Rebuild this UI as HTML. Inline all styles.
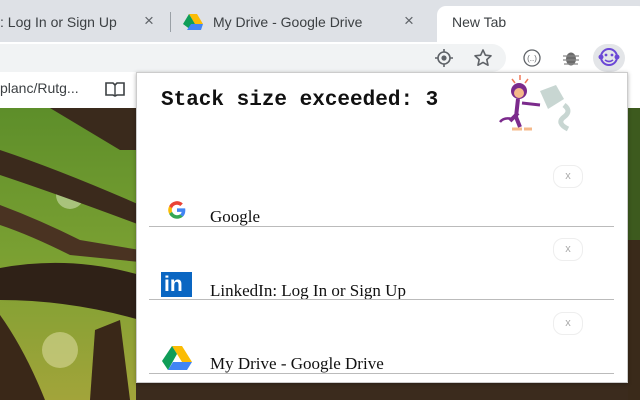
<!DOCTYPE html>
<html><head><meta charset="utf-8"><style>
*{margin:0;padding:0;box-sizing:border-box}
body{width:640px;height:400px;overflow:hidden;position:relative;font-family:"Liberation Sans",sans-serif;background:#fff}
.abs{position:absolute}
</style></head><body>
<svg class="abs" style="left:0;top:108px" width="640" height="292" viewBox="0 108 640 292">
<defs><linearGradient id="g" x1="0" y1="0" x2="0" y2="1"><stop offset="0" stop-color="#5d8e2a"/><stop offset=".5" stop-color="#7aa032"/><stop offset="1" stop-color="#a2a43a"/></linearGradient></defs>
<rect x="0" y="108" width="640" height="292" fill="url(#g)"/>
<circle cx="70" cy="195" r="14" fill="#cfe0b0" opacity=".6"/>
<circle cx="60" cy="350" r="18" fill="#d8d89a" opacity=".6"/>
<path d="M50 108 L140 108 L140 150 L120 150 Z" fill="#3a2a1c"/>
<path d="M0 150 Q60 170 140 205 L140 225 Q60 195 0 175 Z" fill="#3b2a1c"/>
<path d="M0 205 Q40 220 80 240 L140 250 L140 262 L70 255 Q30 235 0 225 Z" fill="#4a3322"/>
<path d="M0 268 Q70 255 140 275 L140 320 Q70 300 0 300 Z" fill="#2f2117"/>
<path d="M0 315 Q25 350 45 400 L0 400 Z" fill="#3a2818"/>
<path d="M95 330 L120 320 L130 400 L90 400 Z" fill="#3a2818"/>
<rect x="136" y="380" width="504" height="20" fill="#3b2b1d"/>
<path d="M628 108 L640 108 L640 240 L628 240 Z" fill="#3d5a1e"/>
<path d="M628 240 L640 240 L640 400 L628 400 Z" fill="#3a2a1a"/>
</svg>
<!-- tab strip -->
<div class="abs" style="left:0;top:0;width:640px;height:42px;background:#dee1e6"></div>
<div class="abs" style="left:0;top:14px;font-size:14px;color:#3c4043">: Log In or Sign Up</div>
<div class="abs" style="left:144px;top:11px;font-size:17px;color:#5f6368">×</div>
<div class="abs" style="left:170px;top:12px;width:1px;height:20px;background:#9aa0a6"></div>
<svg class="abs" style="left:183px;top:14px" width="20" height="16" viewBox="0 0 20 16"><path d="M6 0h8l6 10h-8z" fill="#fbbc04"/><path d="M6 0l6 10-4 6L0 10z" fill="#0f9d58"/><path d="M4 16h14l2-6H8z" fill="#4285f4"/></svg>
<div class="abs" style="left:213px;top:14px;font-size:14px;color:#3c4043">My Drive - Google Drive</div>
<div class="abs" style="left:404px;top:11px;font-size:17px;color:#5f6368">×</div>
<div class="abs" style="left:437px;top:6px;width:210px;height:38px;background:#fff;border-radius:9px 9px 0 0"></div>
<div class="abs" style="left:452px;top:14px;font-size:14px;color:#3c4043">New Tab</div>
<!-- toolbar -->
<div class="abs" style="left:0;top:42px;width:640px;height:66px;background:#fff"></div>
<div class="abs" style="left:-20px;top:44px;width:526px;height:28px;background:#f1f3f4;border-radius:14px"></div>
<svg class="abs" style="left:434px;top:48px" width="20" height="20" viewBox="0 0 20 20"><circle cx="10" cy="10" r="6" fill="none" stroke="#5f6368" stroke-width="1.6"/><circle cx="10" cy="10" r="2.6" fill="#5f6368"/><path d="M10 1v3M10 16v3M1 10h3M16 10h3" stroke="#5f6368" stroke-width="1.6"/></svg>
<svg class="abs" style="left:473px;top:48px" width="20" height="20" viewBox="0 0 20 20"><path d="M10 2l2.4 5.2 5.6.6-4.2 3.8 1.2 5.6L10 14.4 5 17.2l1.2-5.6L2 7.8l5.6-.6z" fill="none" stroke="#5f6368" stroke-width="1.6" stroke-linejoin="round"/></svg>
<svg class="abs" style="left:522px;top:48px" width="20" height="20" viewBox="0 0 20 20"><circle cx="10" cy="10" r="8" fill="none" stroke="#5f6368" stroke-width="1.3"/><text x="10" y="13" font-size="8" text-anchor="middle" fill="#5f6368" font-family="Liberation Sans">(..)</text></svg>
<svg class="abs" style="left:562px;top:48px" width="18" height="20" viewBox="0 0 18 20"><ellipse cx="9" cy="11" rx="5" ry="6.5" fill="#6b6b6b"/><path d="M1 8h16M1 12h16M2 16h14" stroke="#888" stroke-width="1.2"/></svg>
<div class="abs" style="left:593px;top:44px;width:32px;height:28px;background:#e3e5e8;border-radius:14px"></div>
<svg class="abs" style="left:598px;top:46px" width="22" height="22" viewBox="0 0 22 22"><circle cx="11" cy="11" r="8" fill="none" stroke="#6b47d6" stroke-width="2"/><circle cx="3" cy="11" r="2.5" fill="#6b47d6"/><circle cx="19" cy="11" r="2.5" fill="#6b47d6"/><circle cx="8" cy="9" r="1.4" fill="#6b47d6"/><circle cx="14" cy="9" r="1.4" fill="#6b47d6"/><path d="M7 14q4 3 8 0" fill="none" stroke="#6b47d6" stroke-width="1.6"/></svg>
<div class="abs" style="left:0;top:80px;font-size:14px;color:#3c4043">planc/Rutg...</div>
<svg class="abs" style="left:105px;top:81px" width="20" height="16" viewBox="0 0 20 16"><path d="M1 2h7l2 2 2-2h7v12h-7l-2 1-2-1H1z" fill="none" stroke="#3c4043" stroke-width="1.6"/><path d="M10 4v11" stroke="#3c4043" stroke-width="1.4"/></svg>
<!-- popup -->
<div class="abs" style="left:136px;top:72px;width:492px;height:311px;background:#fff;border:1px solid #ccc;box-shadow:0 1px 4px rgba(0,0,0,.3)"></div>
<div class="abs" style="left:161px;top:89px;font-family:'Liberation Mono',monospace;font-size:21px;font-weight:bold;color:#111;letter-spacing:0px">Stack size exceeded: 3</div>
<svg class="abs" style="left:498px;top:73px" width="90" height="60" viewBox="0 0 90 60"><path d="M14 46q-8-2-12 3" stroke="#7b2a8c" stroke-width="2.5" fill="none"/><ellipse cx="21" cy="18" rx="8" ry="8" fill="#7b2a8c"/><ellipse cx="21" cy="20" rx="5" ry="5" fill="#f5b98a"/><path d="M20 26l-2 18 4 10M20 40l-8 8" stroke="#7b2a8c" stroke-width="4" fill="none"/><path d="M24 30l18 2" stroke="#7b2a8c" stroke-width="3"/><path d="M42 18l16-6 8 14-16 10z" fill="#c8d6d2"/><path d="M66 32q8 6 0 12t4 12" stroke="#c8d6d2" stroke-width="5" fill="none"/><path d="M14 6l3 4M22 2v5M30 6l-3 4" stroke="#f07a5a" stroke-width="1.5"/><path d="M14 56h10M26 56h8" stroke="#f5b98a" stroke-width="3"/></svg>
<!-- rows -->
<div class="abs" style="left:553px;top:165px;width:30px;height:23px;border:1px solid #eee;border-radius:10px;font-size:11px;color:#aaa;text-align:center;line-height:21px">x</div>
<svg class="abs" style="left:165px;top:200px" width="24" height="20" viewBox="0 0 48 48"><path d="M44 24.5c0-1.5-.1-3-.4-4.5H24v8.5h11.3a9.7 9.7 0 0 1-4.2 6.3l6.8 5.3c4-3.7 6.1-9.1 6.1-15.6z" fill="#4285f4"/><path d="M24 45c5.7 0 10.4-1.9 13.9-5.1l-6.8-5.3c-1.9 1.3-4.3 2-7.1 2-5.5 0-10.1-3.7-11.8-8.6l-7 5.4C8.7 40.4 15.8 45 24 45z" fill="#34a853"/><path d="M12.2 28c-.9-2.6-.9-5.4 0-8l-7-5.4a21 21 0 0 0 0 18.8z" fill="#fbbc04"/><path d="M24 11.4c3.1 0 5.8 1.1 8 3.1l6-6A20.6 20.6 0 0 0 5.2 14.6l7 5.4c1.7-5 6.3-8.6 11.8-8.6z" fill="#ea4335"/></svg>
<div class="abs" style="left:210px;top:207px;font-family:'Liberation Serif',serif;font-size:17px;color:#111">Google</div>
<div class="abs" style="left:149px;top:226px;width:465px;height:1px;background:#bbb"></div>

<div class="abs" style="left:553px;top:238px;width:30px;height:23px;border:1px solid #eee;border-radius:10px;font-size:11px;color:#aaa;text-align:center;line-height:21px">x</div>
<div class="abs" style="left:161px;top:272px;width:31px;height:25px;background:#0a66c2;color:#fff;font-weight:bold;font-size:21px;line-height:25px;padding-left:3px">in</div>
<div class="abs" style="left:210px;top:281px;font-family:'Liberation Serif',serif;font-size:17px;color:#111">LinkedIn: Log In or Sign Up</div>
<div class="abs" style="left:149px;top:299px;width:465px;height:1px;background:#bbb"></div>

<div class="abs" style="left:553px;top:312px;width:30px;height:23px;border:1px solid #eee;border-radius:10px;font-size:11px;color:#aaa;text-align:center;line-height:21px">x</div>
<svg class="abs" style="left:162px;top:346px" width="30" height="24" viewBox="0 0 30 24"><path d="M10 0h10l10 16H20z" fill="#fbbc04"/><path d="M10 0l5 8-9 16L0 15z" fill="#0f9d58"/><path d="M6 24h19l5-8H11z" fill="#4285f4"/></svg>
<div class="abs" style="left:210px;top:354px;font-family:'Liberation Serif',serif;font-size:17px;color:#111">My Drive - Google Drive</div>
<div class="abs" style="left:149px;top:373px;width:465px;height:1px;background:#bbb"></div>
</body></html>
